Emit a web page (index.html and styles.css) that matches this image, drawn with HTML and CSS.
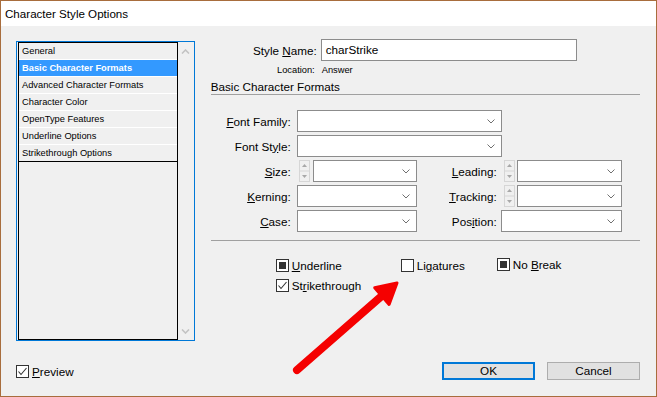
FILE: index.html
```html
<!DOCTYPE html>
<html>
<head>
<meta charset="utf-8">
<title>Character Style Options</title>
<link rel="stylesheet" href="styles.css">
</head>
<body>
<div class="window">
  <div class="titlebar">Character Style Options</div>
  <div class="body">
    <div class="main">
      <div class="listwrap">
        <div class="list">
          <div class="item">General</div>
          <div class="item selected">Basic Character Formats</div>
          <div class="item">Advanced Character Formats</div>
          <div class="item">Character Color</div>
          <div class="item">OpenType Features</div>
          <div class="item">Underline Options</div>
          <div class="item last">Strikethrough Options</div>
        </div>
        <div class="scroll">
          <svg width="9" height="5" viewBox="0 0 9 5"><polyline points="1,4.5 4.5,1 8,4.5" fill="none" stroke="#c3c3c3" stroke-width="1.6"/></svg>
          <svg width="9" height="5" viewBox="0 0 9 5"><polyline points="1,0.5 4.5,4 8,0.5" fill="none" stroke="#c3c3c3" stroke-width="1.6"/></svg>
        </div>
      </div>
      <div class="form">
        <div class="namerow">
          <div class="namelbl">Style <u>N</u>ame:</div>
          <div class="input">charStrike</div>
        </div>
        <div class="locrow">
          <span class="loclbl">Location:</span>
          <span class="locval">Answer</span>
        </div>
        <div class="section">Basic Character Formats</div>
        <div class="rows">
          <div class="row">
            <div class="l1"><u>F</u>ont Family:</div>
            <div class="dd w205"><svg class="chev" width="8" height="5" viewBox="0 0 8 5"><polyline points="0.5,0.5 4,4 7.5,0.5" fill="none" stroke="#707070" stroke-width="1"/></svg></div>
          </div>
          <div class="row">
            <div class="l1">Font St<u>y</u>le:</div>
            <div class="dd w205"><svg class="chev" width="8" height="5" viewBox="0 0 8 5"><polyline points="0.5,0.5 4,4 7.5,0.5" fill="none" stroke="#707070" stroke-width="1"/></svg></div>
          </div>
          <div class="row">
            <div class="l1"><u>S</u>ize:</div>
            <div class="spin s1"><svg width="11" height="22" viewBox="0 0 11 22"><rect x="0.5" y="0.5" width="10" height="21" fill="#f0f0f0" stroke="#d6d6d6"/><line x1="1" y1="11" x2="10" y2="11" stroke="#d6d6d6"/><polygon points="3,7 8,7 5.5,4" fill="#a8a8a8"/><polygon points="3,15 8,15 5.5,18" fill="#a8a8a8"/></svg></div>
            <div class="dd w104 g3"><svg class="chev" width="8" height="5" viewBox="0 0 8 5"><polyline points="0.5,0.5 4,4 7.5,0.5" fill="none" stroke="#707070" stroke-width="1"/></svg></div>
            <div class="l2"><u>L</u>eading:</div>
            <div class="spin s2"><svg width="11" height="22" viewBox="0 0 11 22"><rect x="0.5" y="0.5" width="10" height="21" fill="#f0f0f0" stroke="#d6d6d6"/><line x1="1" y1="11" x2="10" y2="11" stroke="#d6d6d6"/><polygon points="3,7 8,7 5.5,4" fill="#a8a8a8"/><polygon points="3,15 8,15 5.5,18" fill="#a8a8a8"/></svg></div>
            <div class="dd w105 g2"><svg class="chev" width="8" height="5" viewBox="0 0 8 5"><polyline points="0.5,0.5 4,4 7.5,0.5" fill="none" stroke="#707070" stroke-width="1"/></svg></div>
          </div>
          <div class="row">
            <div class="l1"><u>K</u>erning:</div>
            <div class="dd w120"><svg class="chev" width="8" height="5" viewBox="0 0 8 5"><polyline points="0.5,0.5 4,4 7.5,0.5" fill="none" stroke="#707070" stroke-width="1"/></svg></div>
            <div class="l2"><u>T</u>racking:</div>
            <div class="spin s2"><svg width="11" height="22" viewBox="0 0 11 22"><rect x="0.5" y="0.5" width="10" height="21" fill="#f0f0f0" stroke="#d6d6d6"/><line x1="1" y1="11" x2="10" y2="11" stroke="#d6d6d6"/><polygon points="3,7 8,7 5.5,4" fill="#a8a8a8"/><polygon points="3,15 8,15 5.5,18" fill="#a8a8a8"/></svg></div>
            <div class="dd w105 g2"><svg class="chev" width="8" height="5" viewBox="0 0 8 5"><polyline points="0.5,0.5 4,4 7.5,0.5" fill="none" stroke="#707070" stroke-width="1"/></svg></div>
          </div>
          <div class="row">
            <div class="l1"><u>C</u>ase:</div>
            <div class="dd w120"><svg class="chev" width="8" height="5" viewBox="0 0 8 5"><polyline points="0.5,0.5 4,4 7.5,0.5" fill="none" stroke="#707070" stroke-width="1"/></svg></div>
            <div class="l2">Pos<u>i</u>tion:</div>
            <div class="dd w121 g4"><svg class="chev" width="8" height="5" viewBox="0 0 8 5"><polyline points="0.5,0.5 4,4 7.5,0.5" fill="none" stroke="#707070" stroke-width="1"/></svg></div>
          </div>
        </div>
        <div class="sep"></div>
        <div class="checks">
          <div class="cb"><span class="box"><span class="ind"></span></span><span><u>U</u>nderline</span></div>
          <div class="cb"><span class="box"></span><span>Li<u>g</u>atures</span></div>
          <div class="cb up1"><span class="box"><span class="ind"></span></span><span>No <u>B</u>reak</span></div>
          <div class="cb"><span class="box"><svg width="11" height="11" viewBox="0 0 11 11"><polyline points="1.5,5.5 4,8.5 9.5,2" fill="none" stroke="#333" stroke-width="1.1"/></svg></span><span>St<u>r</u>ikethrough</span></div>
        </div>
      </div>
    </div>
    <div class="footer">
      <div class="cb"><span class="box"><svg width="11" height="11" viewBox="0 0 11 11"><polyline points="1.5,5.5 4,8.5 9.5,2" fill="none" stroke="#333" stroke-width="1.1"/></svg></span><span><u>P</u>review</span></div>
      <div class="buttons">
        <div class="btn ok">OK</div>
        <div class="btn">Cancel</div>
      </div>
    </div>
  </div>
  <svg class="arrow" width="657" height="397" viewBox="0 0 657 397">
    <line x1="297" y1="370" x2="384" y2="294" stroke="#f50000" stroke-width="8" stroke-linecap="round"/>
    <polygon points="397,283 374.7,287.8 389.1,304.4" fill="#f50000" stroke="#f50000" stroke-width="3" stroke-linejoin="round"/>
  </svg>
</div>
</body>
</html>
```
FILE: styles.css
```css
* { box-sizing: border-box; }
html, body { margin: 0; padding: 0; }
body {
  background: #f0f0f0;
  font-family: "Liberation Sans", Arial, sans-serif;
  font-size: 11.7px;
  color: #000;
}
.window {
  position: relative;
  width: 657px;
  height: 397px;
  border: 1px solid #a86d3d;
  background: #f0f0f0;
  display: flex;
  flex-direction: column;
}
.titlebar {
  flex: none;
  height: 25px;
  line-height: 25px;
  background: #fff;
  padding-left: 4px;
  font-size: 11.6px;
}
.body {
  flex: 1;
  padding: 13px 16px 0 15px;
}
.main {
  display: flex;
  height: 302px;
}
.listwrap {
  margin-top: 2px;
  width: 179px;
  height: 300px;
  border: 1px solid #0078d7;
  padding-left: 1px;
  display: flex;
}
.list {
  width: 160px;
  height: 100%;
  border: 1px solid #000;
}
.item {
  height: 17px;
  line-height: 16px;
  border-bottom: 1px solid #fff;
  padding-left: 3px;
  font-size: 9.3px;
  white-space: nowrap;
}
.item.selected {
  background: #3399ff;
  color: #fff;
  font-weight: bold;
}
.item.last { border-bottom-color: #000; }
.scroll {
  flex: 1;
  display: flex;
  flex-direction: column;
  justify-content: space-between;
  align-items: center;
  padding: 7px 0 6px;
}
.scroll svg { display: block; }
.form {
  margin-left: 16px;
  width: 430px;
}
.namerow {
  display: flex;
  align-items: center;
  height: 22px;
}
.namelbl {
  width: 106px;
  text-align: right;
}
.input {
  margin-left: 4px;
  width: 256px;
  height: 22px;
  border: 1px solid #8c8c8c;
  background: #fff;
  padding-left: 4px;
  line-height: 20px;
}
.locrow {
  display: flex;
  margin-top: 4px;
  line-height: 11px;
  font-size: 9.3px;
}
.loclbl {
  width: 104px;
  text-align: right;
}
.locval { margin-left: 7px; }
.section {
  margin-top: 3px;
  line-height: 15px;
  border-bottom: 1px solid #a0a0a0;
}
.rows {
  margin-top: 15px;
  display: flex;
  flex-direction: column;
  gap: 3px;
}
.row {
  display: flex;
  align-items: center;
  height: 22px;
}
.l1, .l2 {
  flex: none;
  width: 80px;
  text-align: right;
}
.dd {
  flex: none;
  height: 22px;
  border: 1px solid #8c8c8c;
  background: #fff;
  display: flex;
  align-items: center;
  justify-content: flex-end;
  padding-right: 6px;
  margin-left: 6px;
}
.dd .chev { display: block; }
.w205 { width: 205px; }
.w120 { width: 120px; }
.w121 { width: 121px; }
.w104 { width: 104px; }
.w105 { width: 105px; }
.g2 { margin-left: 2px; }
.g3 { margin-left: 3px; }
.g4 { margin-left: 4px; }
.spin { flex: none; width: 11px; height: 22px; }
.spin svg { display: block; }
.s1 { margin-left: 8px; }
.s2 { margin-left: 7px; }
.sep {
  margin-top: 8px;
  height: 1px;
  background: #a0a0a0;
}
.checks {
  margin-top: 18px;
  padding-left: 65px;
  display: grid;
  grid-template-columns: 125px 96px auto;
  row-gap: 7px;
}
.cb {
  display: flex;
  align-items: center;
  gap: 3px;
  height: 13px;
  white-space: nowrap;
}
.cb.up1 { margin-top: -1px; }
.box {
  flex: none;
  width: 13px;
  height: 13px;
  border: 1px solid #333;
  background: #fff;
  display: flex;
  align-items: center;
  justify-content: center;
}
.box svg { display: block; }
.ind {
  width: 7px;
  height: 7px;
  background: #333;
}
.footer {
  display: flex;
  align-items: center;
  margin-top: 21px;
  height: 18px;
}
.buttons {
  margin-left: auto;
  display: flex;
  gap: 12px;
}
.btn {
  width: 93px;
  height: 18px;
  background: #e1e1e1;
  border: 1px solid #adadad;
  text-align: center;
  line-height: 16px;
}
.btn.ok {
  border-color: #0078d7;
  box-shadow: inset 0 0 0 1px #0078d7;
}
.arrow {
  position: absolute;
  left: -1px;
  top: -1px;
  pointer-events: none;
}
```
